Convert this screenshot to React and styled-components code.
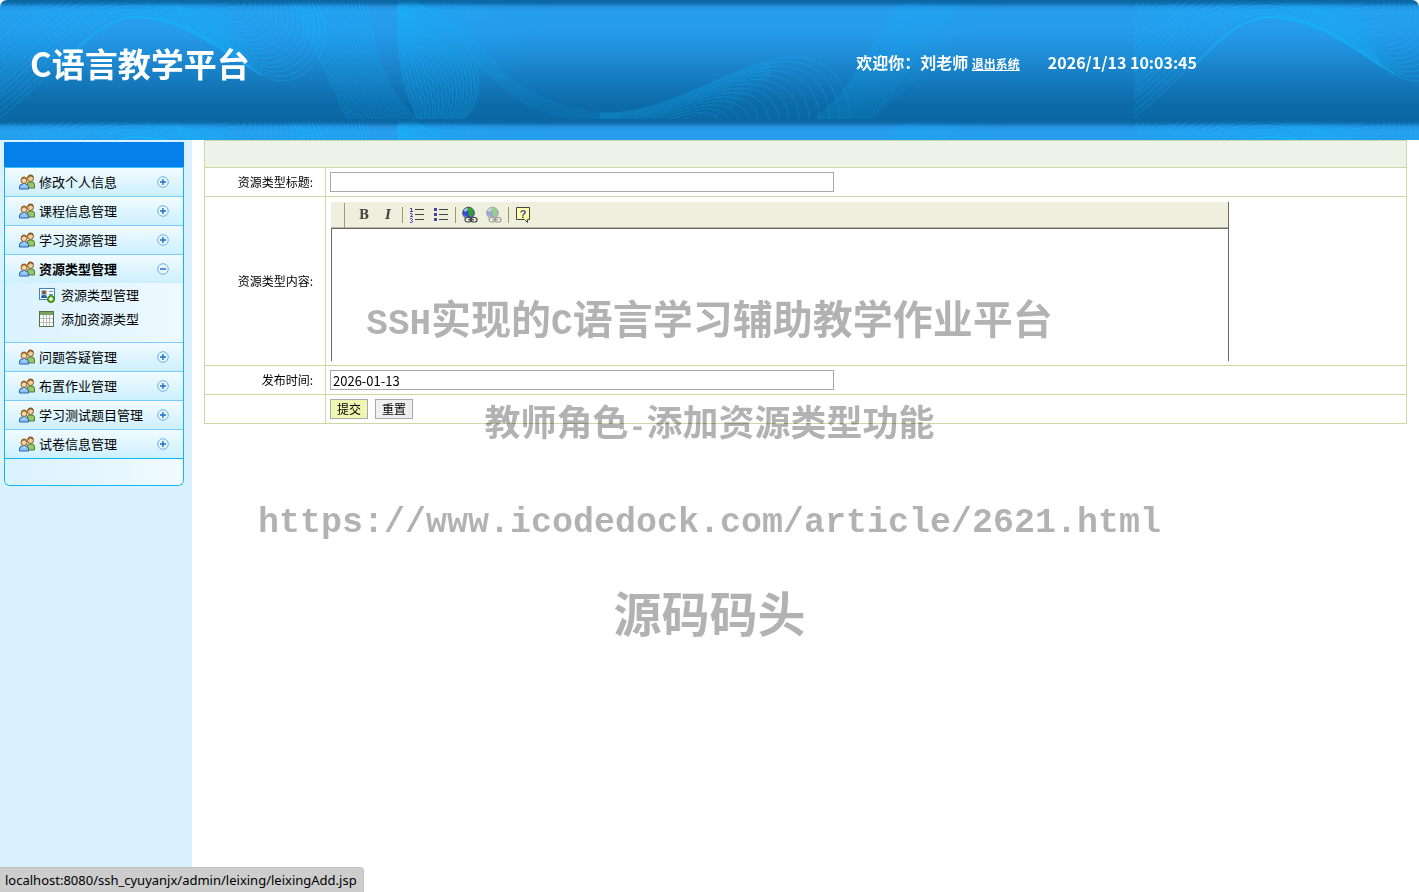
import React from 'react';
import styled, { createGlobalStyle } from 'styled-components';

const menus = [
    { title: '修改个人信息' },
    { title: '课程信息管理' },
    { title: '学习资源管理' },
    {
        title: '资源类型管理',
        children: [
            { title: '资源类型管理', icon: 'card' },
            { title: '添加资源类型', icon: 'sheet' },
        ],
    },
    { title: '问题答疑管理' },
    { title: '布置作业管理' },
    { title: '学习测试题目管理' },
    { title: '试卷信息管理' },
];

// each wave is a bundle of curves blended between a first and a last one
const waves = [
    {
        count: 18, opacity: 0.6,
        from: [0, 118, 60, 70, 90, 18, 135, 17, 190, 17, 240, 68, 275, 80, 300, 86, 328, 60, 325, 30, 324, 15, 318, 5, 310, -10],
        to: [0, 8, 10, 0, 20, -40, 120, -50, 170, -40, 200, 2, 215, 4, 225, 4, 232, 4, 234, 0, 234, -5, 234, -8, 234, -20],
    },
    {
        count: 10, opacity: 0.4,
        from: [0, 96, 40, 55, 80, 8, 135, 17, 180, 20, 220, 50, 250, 68],
        to: [0, 40, 40, 0, 80, -30, 135, -10, 180, 0, 220, 20, 250, 68],
    },
    {
        count: 20, opacity: 0.5,
        from: [290, -5, 315, 50, 325, 70, 348, 120],
        to: [366, -5, 374, 60, 390, 95, 418, 120],
    },
    {
        count: 20, opacity: 0.5,
        from: [399, -5, 393, 50, 405, 90, 418, 120],
        to: [402, -5, 440, 10, 510, 70, 462, 120],
    },
    {
        count: 14, opacity: 0.4,
        from: [399, 0, 420, 30, 470, 60, 476, 85, 478, 100, 470, 112, 462, 120],
        to: [399, 80, 405, 90, 410, 100, 415, 110, 416, 114, 417, 118, 418, 120],
    },
    {
        count: 14, opacity: 0.22,
        from: [400, 0, 440, 10, 480, 40, 500, 70, 540, 105, 590, 114, 620, 114],
        to: [470, 0, 460, 50, 470, 60, 490, 75, 530, 120, 570, 120, 620, 120],
    },
    {
        count: 14, opacity: 0.5,
        from: [600, 113, 670, 116, 740, 58, 795, 57, 825, 57, 850, 80, 850, 120],
        to: [600, 122, 640, 126, 660, 120, 680, 116, 700, 110, 715, 112, 718, 120],
    },
    {
        count: 9, opacity: 0.3,
        from: [620, 114, 690, 108, 740, 72, 770, 62],
        to: [700, 122, 730, 110, 750, 90, 770, 76],
    },
    {
        count: 16, opacity: 0.4,
        from: [904, -5, 880, 30, 860, 80, 815, 120],
        to: [970, -5, 925, 30, 900, 90, 870, 120],
    },
];

const wavePath = (wave, i) => {
    const t = i / (wave.count - 1);
    const p = wave.from.map((v, n) => (v + (wave.to[n] - v) * t).toFixed(1));
    return `M${p[0]} ${p[1]}C${p.slice(2).join(' ')}`;
};

const HeaderArt = () => (
    <Art aria-hidden="true">
        <defs>
            <linearGradient id="sky" x1="0" y1="0" x2="0" y2="1">
                <stop offset="0" stopColor="#0b66a1" />
                <stop offset="0.025" stopColor="#0d6aa8" />
                <stop offset="0.055" stopColor="#2590de" />
                <stop offset="0.09" stopColor="#279eee" />
                <stop offset="0.28" stopColor="#259aea" />
                <stop offset="0.5" stopColor="#1d89d2" />
                <stop offset="0.72" stopColor="#1376b8" />
                <stop offset="0.88" stopColor="#0c6aa8" />
                <stop offset="1" stopColor="#0b67a3" />
            </linearGradient>
            <linearGradient id="glow" x1="0" y1="0" x2="1" y2="0">
                <stop offset="0" stopColor="#12b4fa" stopOpacity="0.4" />
                <stop offset="1" stopColor="#12b4fa" stopOpacity="0" />
            </linearGradient>
            <linearGradient id="fade" x1="0" y1="0" x2="0" y2="1">
                <stop offset="0.01" stopColor="#111" />
                <stop offset="0.06" stopColor="#fff" />
                <stop offset="0.6" stopColor="#aaa" />
                <stop offset="1" stopColor="#777" />
            </linearGradient>
            <mask id="fadeMask" maskUnits="userSpaceOnUse" x="0" y="0" width="1134" height="120">
                <rect width="1134" height="119" fill="url(#fade)" />
            </mask>
            <clipPath id="tileClip"><rect width="1134" height="120" /></clipPath>
            <g id="tile" clipPath="url(#tileClip)">
                <rect width="1134" height="120" fill="url(#sky)" />
                <g mask="url(#fadeMask)" fill="none">
                    <path d="M0 0H310C325 20 325 50 310 70C290 85 270 80 245 62C200 40 170 17 135 17C90 18 60 70 0 118Z" fill="#14aefa" opacity="0.08" />
                    <path d="M285 0H366C374 60 390 95 418 120H348C325 70 315 50 285 0Z" fill="#14aefa" opacity="0.08" />
                    <path d="M399 0H550C530 60 520 90 480 75C485 100 475 112 462 120H418C405 90 393 50 399 0Z" fill="url(#glow)" opacity="0.6" />
                    <path d="M904 0H1010C980 20 900 100 870 120H815C860 80 880 30 904 0Z" fill="url(#glow)" opacity="0.5" />
                    {waves.map((wave, n) => (
                        <g key={n} stroke="#12b8fb" opacity={wave.opacity}>
                            {Array.from({ length: wave.count }, (_, i) => (
                                <path key={i} d={wavePath(wave, i)} />
                            ))}
                        </g>
                    ))}
                    <path d="M60 66C90 35 110 18 135 17C190 17 220 50 262 75" stroke="#13bafc" strokeWidth="2" opacity="0.6" />
                </g>
            </g>
        </defs>
        <use href="#tile" />
        <use href="#tile" x="1134" />
        <use href="#tile" y="120" />
        <use href="#tile" x="1134" y="120" />
    </Art>
);

const UsersIcon = () => (
    <svg width="16" height="16" viewBox="0 0 16 16" aria-hidden="true">
        <path d="M8 14V11q0-3 3-3h2q2.500 0 2.500 3v3z" fill="#9cc765" stroke="#4f7d2a" />
        <circle cx="11.500" cy="4.500" r="3" fill="#f3cf9e" stroke="#80531f" />
        <path d="M8.500 4q0-3.500 3-3.500t3 3q-2-.5-3-1.500-1 1.500-3 2z" fill="#86571f" />
        <path d="M.5 15v-2q0-3 3-3h3q3 0 3 3v2z" fill="#8fc2f5" stroke="#2462b5" />
        <path d="M4 10.500l1 1.500 1.500-1.500z" fill="#fff" />
        <circle cx="5" cy="6.500" r="3" fill="#f7d5a6" stroke="#85551f" />
        <path d="M2 6q0-3.500 3-3.500t3 3q-2-.5-3-1.500-1 1.500-3 2z" fill="#9a682b" />
    </svg>
);

const ToggleIcon = ({ open }) => (
    <svg width="12" height="12" viewBox="0 0 12 12" aria-hidden="true">
        <circle cx="6" cy="6" r="5.300" fill="#e6f6ff" stroke="#6db0e6" />
        <path d={open ? 'M3 6h6' : 'M3 6h6M6 3v6'} stroke="#1c6fc4" strokeWidth="1.400" />
    </svg>
);

const CardIcon = () => (
    <svg width="16" height="16" viewBox="0 0 16 16" aria-hidden="true">
        <rect x=".5" y="1.500" width="15" height="11" fill="#fff" stroke="#3f83bd" />
        <rect x="2" y="3" width="6" height="8" fill="#9cc9ee" />
        <circle cx="5" cy="5.500" r="2" fill="#8a5523" />
        <path d="M2 11q0-3 3-3t3 3z" fill="#2465ae" />
        <path d="M10 4.500h4M10 7.500h4" stroke="#5a8fc0" />
        <circle cx="12" cy="12" r="3.600" fill="#55a51c" stroke="#35790b" strokeWidth=".8" />
        <path d="M10 12h4M12 10v4" stroke="#fff" strokeWidth="1.400" />
    </svg>
);

const SheetIcon = () => (
    <svg width="16" height="16" viewBox="0 0 16 16" aria-hidden="true">
        <rect x=".5" y=".5" width="14" height="15" fill="#fff" stroke="#557043" />
        <path d="M1 1h13v3H1z" fill="#7ba35c" />
        <path d="M1 7.500h13M1 11.500h13M4.500 4v11M7.500 4v11M10.500 4v11" stroke="#bbb" />
    </svg>
);

const ListIcon = ({ ordered }) => (
    <svg width="16" height="16" viewBox="0 0 16 16" aria-hidden="true" shapeRendering="crispEdges">
        <path d="M6 2.500h9M6 7.500h9M6 12.500h9" stroke="#444" />
        {ordered ? (
            <path d="M1 1.500h1M2 1v4M1 4.500h3M1 6.500h2M3 7v1M2 8.500h1M1 9.500h3M1 11.500h2M3 12v1M2 13.500h1M3 14v1M1 15.500h2" stroke="#4a4a9c" fill="none" />
        ) : (
            <path d="M1 1h3v3H1zM1 6h3v3H1zM1 11h3v3H1z" fill="#4343a5" />
        )}
    </svg>
);

const GlobeIcon = ({ faded }) => (
    <svg width="18" height="18" viewBox="0 0 18 18" aria-hidden="true" opacity={faded ? 0.45 : 1}>
        <circle cx="7.500" cy="7" r="5.800" fill="#3547d8" stroke="#4a4a60" />
        <path d="M7 2q4-1 5.500 3v4L10 11 7 9l1-2-2-2z" fill="#30a030" />
        <path d="M3 4l3-2 1 1-3 3z" fill="#bfe3f4" />
        <path d="M3 9l3 2-1 1z" fill="#8fc98f" />
        <g fill="#efefde" stroke="#404040" strokeWidth="1.200">
            <rect x="4" y="11.500" width="6" height="4.500" rx="2.200" />
            <rect x="10" y="11.500" width="6" height="4.500" rx="2.200" />
            <path d="M7 13.700h6" />
        </g>
    </svg>
);

const HelpIcon = () => (
    <HelpBubble>
        <svg width="14" height="16" viewBox="0 0 14 16" aria-hidden="true">
            <path d="M.5.500h13v12h-2v3l-3-3h-8z" fill="#ffffa8" stroke="#444" />
        </svg>
        <span>?</span>
    </HelpBubble>
);

const App = () => {
    const [opened, setOpened] = React.useState(3);
    const [title, setTitle] = React.useState('');
    const [content, setContent] = React.useState('');
    const [date, setDate] = React.useState('2026-01-13');

    const handleReset = () => {
        setTitle('');
        setContent('');
    }

    return (
        <Page>
            <GlobalStyle />
            <Header>
                <HeaderArt />
                <SiteTitle>C语言教学平台</SiteTitle>
                <Welcome>
                    <span>欢迎你：刘老师 <Logout href="#logout">退出系统</Logout></span>
                    <span>2026/1/13 10:03:45</span>
                </Welcome>
            </Header>
            <Body>
                <Sidebar>
                    <MenuTop />
                    <Menu>
                        {menus.map((menu, i) => (
                            <MenuGroup key={menu.title}>
                                <MenuButton type="button" $open={opened === i} onClick={() => setOpened(i)}>
                                    <UsersIcon />
                                    <MenuText>{menu.title}</MenuText>
                                    <ToggleIcon open={opened === i} />
                                </MenuButton>
                                {opened === i && menu.children && (
                                    <SubMenu>
                                        {menu.children.map((child) => (
                                            <SubLink key={child.title} href="#leixing">
                                                {child.icon === 'card' ? <CardIcon /> : <SheetIcon />}
                                                <MenuText>{child.title}</MenuText>
                                            </SubLink>
                                        ))}
                                    </SubMenu>
                                )}
                            </MenuGroup>
                        ))}
                        <MenuBottom />
                    </Menu>
                </Sidebar>
                <Main>
                    <form onSubmit={(e) => e.preventDefault()}>
                        <FormTable>
                            <colgroup>
                                <LabelColumn />
                                <col />
                            </colgroup>
                            <tbody>
                                <tr>
                                    <HeadCell colSpan={2} />
                                </tr>
                                <tr>
                                    <LabelCell><label htmlFor="title">资源类型标题:</label></LabelCell>
                                    <Cell><TextInput id="title" value={title} onChange={(e) => setTitle(e.target.value)} /></Cell>
                                </tr>
                                <tr>
                                    <LabelCell><label htmlFor="content">资源类型内容:</label></LabelCell>
                                    <EditorCell>
                                        <Editor>
                                            <Toolbar>
                                                <Handle />
                                                <Tool type="button" aria-label="加粗"><b>B</b></Tool>
                                                <Tool type="button" aria-label="倾斜"><i>I</i></Tool>
                                                <Divider />
                                                <Tool type="button" aria-label="编号列表"><ListIcon ordered /></Tool>
                                                <Tool type="button" aria-label="项目列表"><ListIcon /></Tool>
                                                <Divider />
                                                <Tool type="button" aria-label="插入链接"><GlobeIcon /></Tool>
                                                <Tool type="button" aria-label="取消链接"><GlobeIcon faded /></Tool>
                                                <Divider />
                                                <Tool type="button" aria-label="关于"><HelpIcon /></Tool>
                                            </Toolbar>
                                            <EditorArea id="content" value={content} onChange={(e) => setContent(e.target.value)} />
                                        </Editor>
                                    </EditorCell>
                                </tr>
                                <tr>
                                    <LabelCell><label htmlFor="date">发布时间:</label></LabelCell>
                                    <Cell><TextInput id="date" value={date} onChange={(e) => setDate(e.target.value)} /></Cell>
                                </tr>
                                <tr>
                                    <LabelCell />
                                    <Cell>
                                        <Actions>
                                            <Button type="submit" $primary>提交</Button>
                                            <Button type="button" onClick={handleReset}>重置</Button>
                                        </Actions>
                                    </Cell>
                                </tr>
                            </tbody>
                        </FormTable>
                    </form>
                </Main>
            </Body>
            <Watermark>
                <Mark $size={40} $height={66}><Mono $size={36}>SSH</Mono>实现的<Mono $size={36}>C</Mono>语言学习辅助教学作业平台</Mark>
                <Mark $size={36} $height={60}>教师角色<Mono $size={30}>-</Mono>添加资源类型功能</Mark>
                <Mark $size={36} $height={52}><Mono $size={35}>https://www.icodedock.com/article/2621.html</Mono></Mark>
                <Mark $size={48} $height={58}>源码码头</Mark>
            </Watermark>
            <StatusBar>localhost:8080/ssh_cyuyanjx/admin/leixing/leixingAdd.jsp</StatusBar>
        </Page>
    )
}

const GlobalStyle = createGlobalStyle`
    * {
        box-sizing: border-box;
    }

    body {
        margin: 0;
        background-color: #fff;
        color: #000;
        font-family: 'Noto Sans CJK SC', sans-serif;
        font-size: 12px;
    }

    button, input, textarea {
        font-family: inherit;
    }
`

const Page = styled.div`
    position: relative;
    display: flex;
    flex-direction: column;
    min-height: 100vh;
`

const Header = styled.header`
    position: relative;
    display: flex;
    align-items: center;
    justify-content: space-between;
    height: 140px;
    padding: 0 222px 14px 30px;
    overflow: hidden;
    border-radius: 7px 7px 0 0;
    color: #fff;
    font-weight: bold;
`

const Art = styled.svg`
    position: absolute;
    top: 0;
    left: 0;
    z-index: -1;
    width: 100%;
    height: 100%;
`

const SiteTitle = styled.h1`
    margin: 0;
    font-size: 33px;
    line-height: 48px;
`

const Welcome = styled.div`
    display: flex;
    gap: 28px;
    font-size: 16px;
    line-height: 24px;
`

const Logout = styled.a`
    color: #fff;
    font-size: 12px;
`

const Body = styled.div`
    display: flex;
    flex: 1;
`

const Sidebar = styled.nav`
    flex: none;
    width: 192px;
    padding: 2px 8px 0 4px;
    background-color: #daf2ff;
`

const Menu = styled.div`
    border: 1px solid #10b8ee;
    border-top: none;
    border-radius: 0 0 6px 6px;
    overflow: hidden;
`

const MenuTop = styled.div`
    height: 26px;
    border-bottom: 1px solid #3fbef5;
    background-color: #057fea;
`

const MenuGroup = styled.div`
    border-bottom: 1px solid #79cdf8;

    &:nth-last-child(2) {
        border-bottom-color: #10b8ee;
    }
`

const MenuButton = styled.button`
    display: flex;
    align-items: center;
    gap: 4px;
    width: 100%;
    height: 28px;
    padding: 0 14px;
    border: none;
    background: linear-gradient(#f2fbff, #ccf0fe);
    color: #000;
    font-size: 13px;
    font-weight: ${(props) => (props.$open ? 'bold' : 'normal')};
    text-align: left;
    cursor: pointer;
`

const MenuText = styled.span`
    flex: 1;
    padding-bottom: 2px;
    white-space: nowrap;
`

const SubMenu = styled.div`
    padding-bottom: 11px;
    background: linear-gradient(to right, #daf2ff, #eef9ff);
`

const SubLink = styled.a`
    display: flex;
    align-items: center;
    gap: 6px;
    height: 24px;
    padding-left: 34px;
    color: #000;
    font-size: 13px;
    text-decoration: none;
`

const MenuBottom = styled.div`
    height: 26px;
    background: linear-gradient(to right, #daf2ff, #f0faff);
`

const Main = styled.main`
    flex: 1;
    min-width: 0;
    padding: 0 12px;
`

const FormTable = styled.table`
    width: 100%;
    border-collapse: collapse;
    table-layout: fixed;
`

const LabelColumn = styled.col`
    width: 121px;
`

const Cell = styled.td`
    height: 29px;
    padding: 0 4px;
    border: 1px solid #ccd8a6;
`

const HeadCell = styled(Cell)`
    height: 27px;
    background-color: #edf3e9;
`

const LabelCell = styled(Cell)`
    padding: 0 12px 2px 0;
    text-align: right;
`

const EditorCell = styled(Cell)`
    padding: 5px 5px 4px;
`

const TextInput = styled.input`
    display: block;
    width: 504px;
    max-width: 100%;
    height: 20px;
    padding: 0 2px;
    border: 1px solid #a9a9a9;
    background-color: #fff;
    font-size: 13px;
`

const Editor = styled.div`
    width: 898px;
    max-width: 100%;
    border-right: 1px solid #696969;
`

const Toolbar = styled.div`
    display: flex;
    align-items: center;
    height: 27px;
    border-bottom: 1px solid #696969;
    box-shadow: inset 0 -1px #b5b5a5;
    background-color: #efefde;
`

const Handle = styled.span`
    width: 14px;
    height: 25px;
    margin-right: 7px;
    border-right: 1px solid #9a9a8c;
`

const Tool = styled.button`
    display: flex;
    align-items: center;
    justify-content: center;
    width: 24px;
    height: 22px;
    padding: 0;
    border: none;
    background: none;
    color: #444;
    font-family: 'DejaVu Serif', serif;
    font-size: 12px;
    font-weight: bold;
`

const Divider = styled.span`
    width: 1px;
    height: 16px;
    margin: 0 2px;
    background-color: #9c9c5c;
`

const HelpBubble = styled.span`
    position: relative;
    display: flex;

    span {
        position: absolute;
        inset: 0;
        color: #4343a5;
        font-family: 'Liberation Sans', sans-serif;
        font-size: 11px;
        line-height: 14px;
        text-align: center;
    }
`

const EditorArea = styled.textarea`
    display: block;
    width: 100%;
    height: 132px;
    padding: 4px;
    border: none;
    border-left: 1px solid #696969;
    background-color: #fff;
    font-size: 13px;
    resize: none;
`

const Actions = styled.div`
    display: flex;
    gap: 7px;
`

const Button = styled.button`
    height: 20px;
    padding: 0 6px;
    border: 1px solid #a9a9a9;
    background-color: ${(props) => (props.$primary ? '#f1f7b2' : '#efefef')};
    color: #000;
    font-size: 12px;
    line-height: 18px;
`

const Watermark = styled.div`
    position: absolute;
    top: 284px;
    left: 0;
    right: 0;
    display: flex;
    flex-direction: column;
    align-items: center;
    gap: 40px;
    color: rgba(0, 0, 0, 0.3);
    font-weight: bold;
    pointer-events: none;
`

const Mark = styled.div`
    height: ${(props) => props.$height}px;
    font-size: ${(props) => props.$size}px;
    line-height: ${(props) => props.$height}px;
    white-space: nowrap;
`

const Mono = styled.span`
    font-family: 'Liberation Mono', monospace;
    font-size: ${(props) => props.$size}px;
`

const StatusBar = styled.div`
    position: fixed;
    left: 0;
    bottom: 0;
    height: 25px;
    padding: 0 6px 0 5px;
    border-top: 1px solid #c0c0c0;
    border-right: 1px solid #c0c0c0;
    border-radius: 0 4px 0 0;
    background-color: #cdcdcd;
    font-family: 'Noto Sans', sans-serif;
    font-size: 13px;
    line-height: 24px;
`

export default App;
